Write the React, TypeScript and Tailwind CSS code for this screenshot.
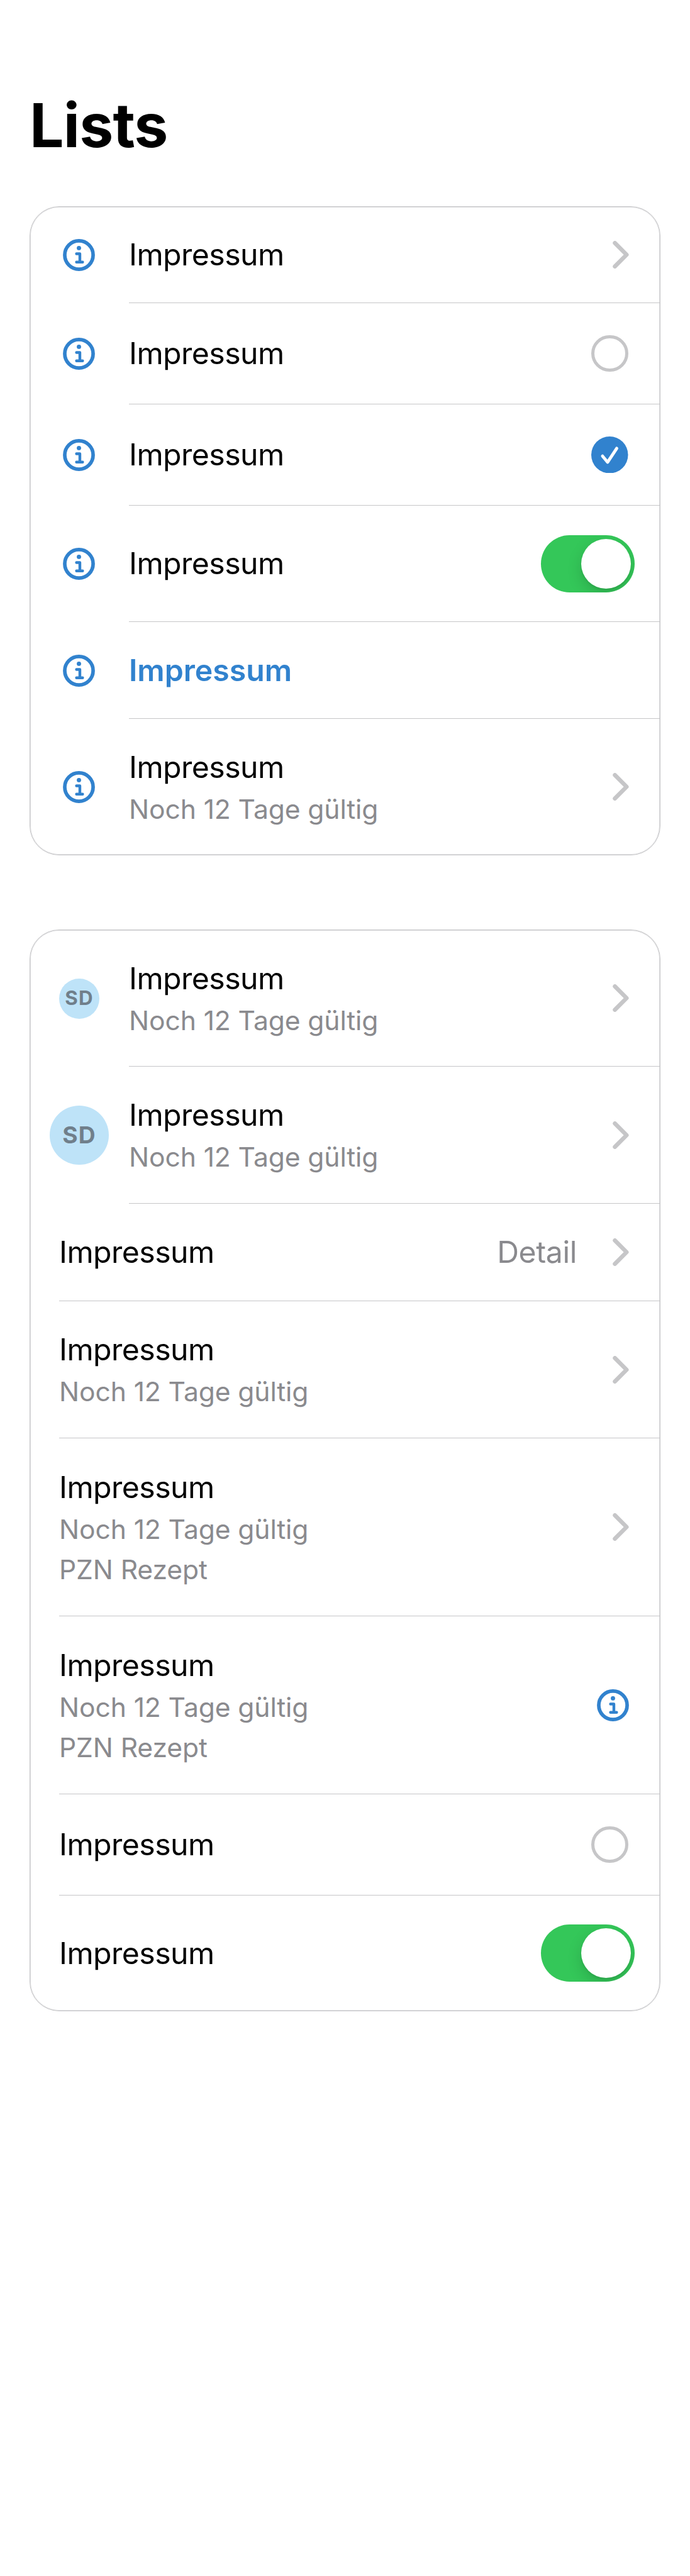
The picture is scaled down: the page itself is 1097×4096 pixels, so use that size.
import type { ReactNode } from "react";

function InfoIcon() {
  return (
    <svg className="size-[51px] shrink-0" viewBox="0 0 52 52" fill="none" stroke="#3182ce">
      <circle cx="26" cy="26" r="23" strokeWidth="5.8" />
      <circle cx="26" cy="14.7" r="3.5" fill="#3182ce" stroke="none" />
      <path d="M22 24h5.5v13.5M22 37.5h10" strokeWidth="4.5" strokeLinecap="round" strokeLinejoin="round" />
    </svg>
  );
}

function Chevron() {
  return (
    <svg className="mr-[49px] h-[44px] w-[26px] shrink-0" viewBox="0 0 26 45" fill="none">
      <path
        d="M3.4 3.4L22.4 22.5L3.4 41.6"
        stroke="#c6c6c8"
        strokeWidth="6.8"
        strokeLinecap="round"
        strokeLinejoin="round"
      />
    </svg>
  );
}

function Radio({ checked = false }: { checked?: boolean }) {
  if (!checked) {
    return <span className="mr-[50.5px] size-[58.5px] shrink-0 rounded-full border-[5px] border-[#c6c6c8]" />;
  }
  return (
    <svg className="mr-[50.5px] size-[58.5px] shrink-0" viewBox="0 0 60 60" fill="none">
      <circle cx="30" cy="30" r="30" fill="#3182ce" />
      <path
        d="M18.4 32L26.7 42L41.6 19.4"
        stroke="#fff"
        strokeWidth="5"
        strokeLinecap="round"
        strokeLinejoin="round"
      />
    </svg>
  );
}

function Toggle() {
  return (
    <span className="mr-10 flex h-[91px] w-[149px] shrink-0 items-center justify-end overflow-hidden rounded-full bg-[#34c759] pr-1.5">
      <span className="size-[79px] rounded-full bg-white shadow-[0_9px_23px_rgba(0,0,0,0.15),0_3px_3px_rgba(0,0,0,0.06)]" />
    </span>
  );
}

function TrailingInfo() {
  return (
    <span className="mr-[49px] flex">
      <InfoIcon />
    </span>
  );
}

function SmallAvatar() {
  return (
    <span className="flex size-[64px] items-center justify-center rounded-full bg-[#bee3f8] pl-px text-[31.3px] font-bold tracking-[1.2px] text-[#707f8b]">
      SD
    </span>
  );
}

function LargeAvatar() {
  return (
    <span className="flex size-[94px] items-center justify-center rounded-full bg-[#bee3f8] pl-px text-[37.2px] font-bold tracking-[1.2px] text-[#707f8b]">
      SD
    </span>
  );
}

type RowProps = {
  height: string;
  leading?: ReactNode;
  trailing?: ReactNode;
  detail?: string;
  lines?: string[];
  accent?: boolean;
  last?: boolean;
};

function Row({ height, leading, trailing, detail, lines = [], accent, last }: RowProps) {
  return (
    <li className={`flex ${height}`}>
      {leading ? (
        <div className="flex w-[157px] shrink-0 items-center justify-center pr-0.5">{leading}</div>
      ) : (
        <div className="w-[46px] shrink-0" />
      )}
      <div className={`flex flex-1 items-center ${last ? "" : "border-b border-[#c6c6c8]"}`}>
        <div className={lines.length ? "flex-1 pt-0.5" : "flex-1"}>
          <p
            className={
              accent
                ? "text-[48.2px] leading-[70px] font-semibold text-[#3182ce]"
                : "text-[48.2px] leading-[70px] tracking-[-0.55px] text-black"
            }
          >
            Impressum
          </p>
          {lines.map((line) => (
            <p key={line} className="text-[42.6px] leading-[64.5px] tracking-[-0.1px] text-[#8a8a8e]">
              {line}
            </p>
          ))}
        </div>
        {detail && (
          <span className="mr-[57px] text-[48.2px] leading-[70px] tracking-[-0.4px] text-[#8a8a8e]">{detail}</span>
        )}
        {trailing}
      </div>
    </li>
  );
}

function Card({ children }: { children: ReactNode }) {
  return (
    <ul className="rounded-[47px] border border-[#c6c6c8] shadow-[inset_0_0_0_1px_#dedee0]">{children}</ul>
  );
}

const VALID = "Noch 12 Tage gültig";
const PZN = "PZN Rezept";

export default function App() {
  return (
    <main className="flex h-[4096px] w-[1097px] flex-col bg-white pt-[139px] pr-[47px] pl-[47px] font-['Inter',sans-serif]">
      <h1 className="h-[189px] text-[96.6px] leading-[120px] font-bold tracking-[-0.8px] text-black">Lists</h1>
      <div className="flex flex-col gap-[118px]">
        <Card>
          <Row height="h-[153px]" leading={<InfoIcon />} trailing={<Chevron />} />
          <Row height="h-[161px]" leading={<InfoIcon />} trailing={<Radio />} />
          <Row height="h-[161px]" leading={<InfoIcon />} trailing={<Radio checked />} />
          <Row height="h-[185px]" leading={<InfoIcon />} trailing={<Toggle />} />
          <Row height="h-[154px]" leading={<InfoIcon />} accent />
          <Row height="h-[216px]" leading={<InfoIcon />} lines={[VALID]} trailing={<Chevron />} last />
        </Card>
        <Card>
          <Row height="h-[217px]" leading={<SmallAvatar />} lines={[VALID]} trailing={<Chevron />} />
          <Row height="h-[218px]" leading={<LargeAvatar />} lines={[VALID]} trailing={<Chevron />} />
          <Row height="h-[155px]" detail="Detail" trailing={<Chevron />} />
          <Row height="h-[218px]" lines={[VALID]} trailing={<Chevron />} />
          <Row height="h-[283px]" lines={[VALID, PZN]} trailing={<Chevron />} />
          <Row height="h-[283px]" lines={[VALID, PZN]} trailing={<TrailingInfo />} />
          <Row height="h-[161px]" trailing={<Radio />} />
          <Row height="h-[183px]" trailing={<Toggle />} last />
        </Card>
      </div>
    </main>
  );
}
